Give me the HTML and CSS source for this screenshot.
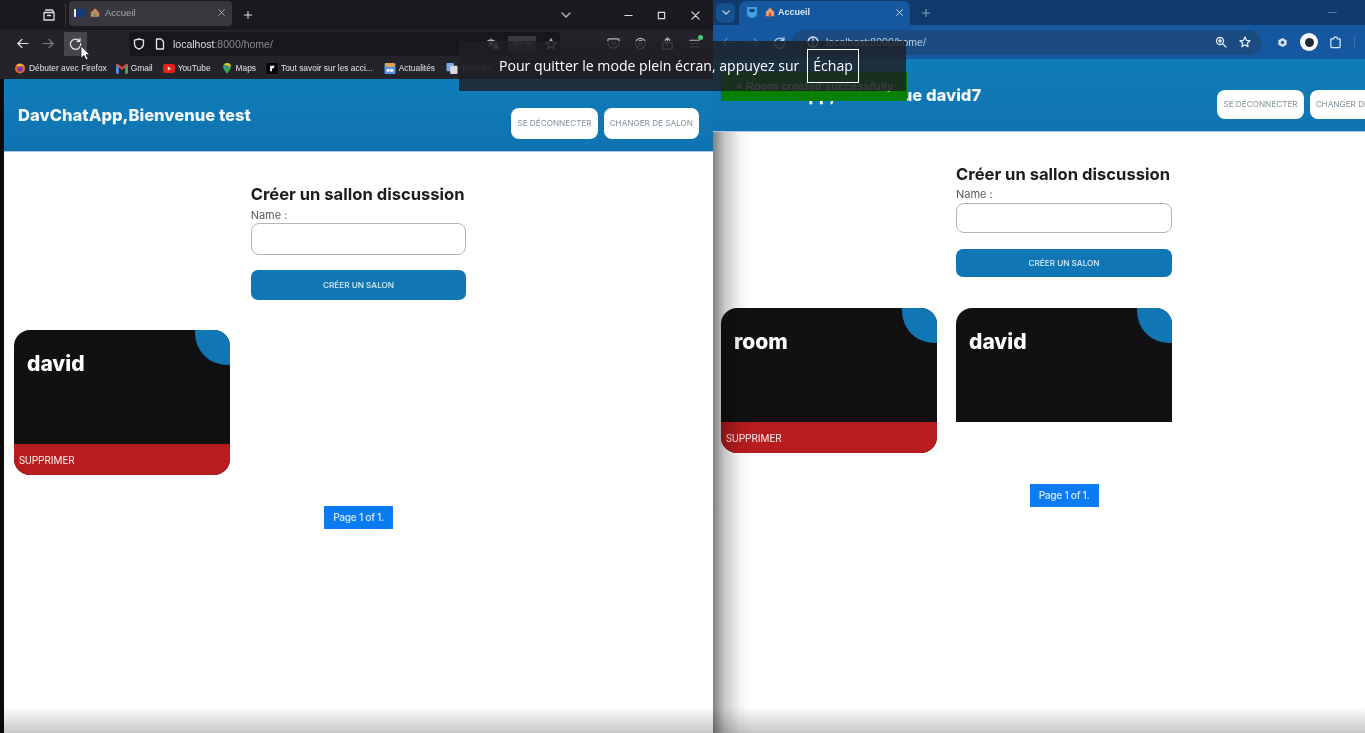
FILE: index.html
```html
<!DOCTYPE html>
<html lang="fr">
<head>
<meta charset="utf-8">
<title>Accueil</title>
<link rel="stylesheet" href="styles.css">
</head>
<body>
<div class="desktop">

  <section class="window fx">
    <div class="fx-tabs">
      <svg class="ic fx-tabview" viewBox="0 0 14 14"><path d="M2 4.500h10v7.500H2zM3.500 2h7l1.500 2.500M5.500 7.500h3" /></svg>
      <div class="fx-sep"></div>
      <div class="fx-tab">
        <span class="fav-blue"></span>
        <svg class="fav-home" viewBox="0 0 12 12"><path d="M6 1l5 5v5H1V6z" fill="#c9875c"/><path d="M4.500 7h3v4h-3z" fill="#5a9a7a"/></svg>
        <span class="fx-tab-title">Accueil</span>
        <svg class="ic fx-tab-x" viewBox="0 0 10 10"><path d="M1 1l8 8M9 1l-8 8"/></svg>
      </div>
      <svg class="ic fx-plus" viewBox="0 0 10 10"><path d="M5 0v10M0 5h10"/></svg>
      <svg class="ic fx-chev" viewBox="0 0 10 6"><path d="M1 1l4 4 4-4"/></svg>
      <svg class="ic fx-min" viewBox="0 0 10 10"><path d="M1 5h8"/></svg>
      <svg class="ic fx-max" viewBox="0 0 10 10"><path d="M1.500 1.500h7v7h-7z"/></svg>
      <svg class="ic fx-close" viewBox="0 0 10 10"><path d="M1 1l8 8M9 1l-8 8"/></svg>
    </div>
    <div class="fx-bar">
      <svg class="ic nav-ic" viewBox="0 0 14 14"><path d="M13 7H2M6.500 2.500L2 7l4.500 4.500"/></svg>
      <svg class="ic nav-ic dim" viewBox="0 0 14 14"><path d="M1 7h11M7.500 2.500L12 7l-4.500 4.500"/></svg>
      <span class="reload-box"><svg class="ic nav-ic" viewBox="0 0 14 14"><path d="M11.500 4.500A5.500 5.500 0 1 0 12.500 7M11.800 1.500v3.200H8.600"/></svg></span>
      <div class="fx-url">
        <svg class="ic url-ic" viewBox="0 0 12 12"><path d="M6 1l4.500 1.200v3.300C10.500 8.500 8.500 10.300 6 11 3.500 10.300 1.500 8.500 1.500 5.500V2.200z"/></svg>
        <svg class="ic url-ic" viewBox="0 0 12 12"><path d="M2.500 1h4.500l2.500 2.500V11h-7z"/></svg>
        <span class="fx-url-text"><b>localhost</b>:8000/home/</span>
        <span class="fx-url-right">
          <svg class="ic url-ic dim2" viewBox="0 0 12 12"><path d="M1 2.500h6M4 1v1.500M6 2.500C5.500 5 3.500 7 1.500 8M2.500 4.500C3.500 6 5 7 6.500 7.500M6.500 11l2.500-6 2.500 6M7.500 9.500h3"/></svg>
          <span class="zoom-chip">90 %</span>
          <svg class="ic url-ic dim2" viewBox="0 0 12 12"><path d="M6 1l1.500 3.300 3.500.4-2.600 2.400.7 3.500L6 8.800 2.900 10.600l.7-3.500L1 4.700l3.500-.4z"/></svg>
        </span>
      </div>
      <div class="fx-tools">
        <svg class="ic" viewBox="0 0 14 14"><path d="M2 2h10a1 1 0 0 1 1 1v3a6 6 0 0 1-12 0V3a1 1 0 0 1 1-1zM4.500 5.500L7 8l2.500-2.500"/></svg>
        <svg class="ic" viewBox="0 0 14 14"><circle cx="7" cy="7" r="5.500"/><circle cx="7" cy="5.500" r="2"/><path d="M3.500 11c.8-2 2-2.500 3.500-2.500s2.700.5 3.500 2.500"/></svg>
        <svg class="ic" viewBox="0 0 14 14"><path d="M2 6h10v7H2zM7 9V1M4.500 3.500L7 1l2.500 2.500"/></svg>
        <span class="menu-wrap">
          <svg class="ic" viewBox="0 0 14 14"><path d="M2 3.500h10M2 7h10M2 10.500h10"/></svg>
          <i class="menu-dot"></i>
        </span>
      </div>
    </div>
    <div class="fx-marks">
      <span class="mark m1"><svg class="mi" viewBox="0 0 12 12"><circle cx="6" cy="6" r="5.500" fill="#e8642a"/><circle cx="6" cy="6.500" r="3" fill="#6a3bb0"/><path d="M2 3c2-3 7-3 9 1-2-1.500-4-1.500-5 0z" fill="#f7b52a"/></svg>Débuter avec Firefox</span>
      <span class="mark m2"><svg class="mi" viewBox="0 0 12 10"><path d="M0 1v9h3V4l3 2.500L9 4v6h3V1L10.500 0 6 3.500 1.500 0z" fill="#d9483b"/><path d="M0 1v9h3V4z" fill="#4a86e8"/><path d="M12 1v9H9V4z" fill="#3aa757"/></svg>Gmail</span>
      <span class="mark m3"><svg class="mi" viewBox="0 0 12 9"><rect width="12" height="9" rx="2" fill="#e62117"/><path d="M4.800 2.500L8 4.500 4.800 6.500z" fill="#fff"/></svg>YouTube</span>
      <span class="mark m4"><svg class="mi" viewBox="0 0 10 14"><path d="M5 0a5 5 0 0 1 5 5c0 3-3 5-5 9-2-4-5-6-5-9a5 5 0 0 1 5-5z" fill="#3aa757"/><path d="M5 0a5 5 0 0 1 5 5L1 2a5 5 0 0 1 4-2z" fill="#f2b90f"/><circle cx="5" cy="5" r="1.800" fill="#3b78e7"/></svg>Maps</span>
      <span class="mark m5"><svg class="mi" viewBox="0 0 12 12"><rect width="12" height="12" rx="1.500" fill="#000"/><path d="M4 3h5L7.500 6H6v3H4z" fill="#fff"/></svg>Tout savoir sur les acci...</span>
      <span class="mark m6"><svg class="mi" viewBox="0 0 12 12"><rect width="12" height="12" rx="1.500" fill="#5b93e8"/><rect x="1" y="0" width="10" height="4" rx="1" fill="#e8a33d"/><circle cx="4" cy="8" r="1.800" fill="#fff"/><circle cx="8" cy="8" r="1.800" fill="#fff"/></svg>Actualités</span>
      <span class="mark m7"><svg class="mi" viewBox="0 0 12 12"><rect width="8" height="9" rx="1" fill="#7aa7ea"/><rect x="4" y="3" width="8" height="9" rx="1" fill="#d8d8dc"/></svg>Traduire</span>
    </div>

    <div class="page">
      <header class="app-head">
        <h1 class="brand">DavChatApp,Bienvenue test</h1>
        <nav class="head-actions">
          <a class="head-btn">SE DÉCONNECTER</a>
          <a class="head-btn">CHANGER DE SALON</a>
        </nav>
      </header>
      <main class="content">
        <form class="room-form">
          <h2 class="form-title">Créer un sallon discussion</h2>
          <label class="form-label">Name :</label>
          <div class="form-input"></div>
          <div class="form-submit">CRÉER UN SALON</div>
        </form>
        <div class="cards">
          <article class="card">
            <div class="card-top"><span class="card-name">david</span><i class="card-corner"></i></div>
            <div class="card-del">SUPPRIMER</div>
          </article>
        </div>
        <div class="pager"><span class="pager-chip">Page 1 of 1.</span></div>
      </main>
    </div>
  </section>

  <section class="window cr">
    <div class="cr-tabs">
      <span class="cr-search"><svg class="ic" viewBox="0 0 10 6"><path d="M1 1l4 4 4-4"/></svg></span>
      <div class="cr-tab">
        <svg class="cr-fav" viewBox="0 0 12 12"><path d="M1 1h10v6a5 5 0 0 1-10 0z" fill="#3fa0e8"/><path d="M3.500 3h5v3h-5z" fill="#0f3a6e"/></svg>
        <svg class="cr-fav2" viewBox="0 0 12 12"><path d="M6 1l5 5v5H1V6z" fill="#e8a06a"/><path d="M4.500 7h3v4h-3z" fill="#d9483b"/></svg>
        <span class="cr-tab-title">Accueil</span>
        <svg class="ic cr-tab-x" viewBox="0 0 10 10"><path d="M1 1l8 8M9 1l-8 8"/></svg>
      </div>
      <svg class="ic cr-plus" viewBox="0 0 10 10"><path d="M5 0v10M0 5h10"/></svg>
      <svg class="ic cr-min" viewBox="0 0 10 10"><path d="M1 5h8"/></svg>
    </div>
    <div class="cr-bar">
      <svg class="ic nav-ic dim3" viewBox="0 0 14 14"><path d="M13 7H2M6.500 2.500L2 7l4.500 4.500"/></svg>
      <svg class="ic nav-ic dim3" viewBox="0 0 14 14"><path d="M1 7h11M7.500 2.500L12 7l-4.500 4.500"/></svg>
      <svg class="ic nav-ic dim4" viewBox="0 0 14 14"><path d="M11.500 4.500A5.500 5.500 0 1 0 12.500 7M11.800 1.500v3.200H8.600"/></svg>
      <div class="cr-url">
        <svg class="ic url-ic" viewBox="0 0 12 12"><circle cx="6" cy="6" r="5"/><path d="M6 5.500V9M6 3v1"/></svg>
        <span class="cr-url-text">localhost:8000/home/</span>
        <span class="cr-url-right">
          <svg class="ic url-ic" viewBox="0 0 12 12"><circle cx="5" cy="5" r="3.500"/><path d="M7.500 7.500L11 11M3.500 5h3M5 3.500v3"/></svg>
          <svg class="ic url-ic" viewBox="0 0 12 12"><path d="M6 1l1.500 3.300 3.500.4-2.600 2.400.7 3.500L6 8.800 2.900 10.600l.7-3.500L1 4.700l3.500-.4z"/></svg>
        </span>
      </div>
      <div class="cr-tools">
        <svg class="cr-tool" viewBox="0 0 12 12"><path d="M6 1l4.500 2.500v5L6 11 1.500 8.500v-5z" fill="#d6e4f2"/><circle cx="6" cy="6" r="1.800" fill="#15589f"/></svg>
        <span class="cr-avatar"><i class="cr-avatar-in"></i></span>
        <svg class="ic cr-puzzle" viewBox="0 0 14 14"><path d="M2 3h3a2 2 0 0 1 4 0h3v8a1.500 1.500 0 0 1-1.500 1.500H3.500A1.500 1.500 0 0 1 2 11z"/></svg>
        <i class="cr-sep"></i>
      </div>
    </div>

    <div class="page">
      <header class="app-head">
        <h1 class="brand">DavChatApp,Bienvenue david7</h1>
        <nav class="head-actions">
          <a class="head-btn">SE DÉCONNECTER</a>
          <a class="head-btn">CHANGER DE SALON</a>
        </nav>
      </header>
      <main class="content">
        <form class="room-form">
          <h2 class="form-title">Créer un sallon discussion</h2>
          <label class="form-label">Name :</label>
          <div class="form-input"></div>
          <div class="form-submit">CRÉER UN SALON</div>
        </form>
        <div class="cards">
          <article class="card">
            <div class="card-top"><span class="card-name">room</span><i class="card-corner"></i></div>
            <div class="card-del">SUPPRIMER</div>
          </article>
          <article class="card card-plain">
            <div class="card-top"><span class="card-name">david</span><i class="card-corner"></i></div>
          </article>
        </div>
        <div class="pager"><span class="pager-chip">Page 1 of 1.</span></div>
      </main>
      <div class="alert">× Room created successfully</div>
    </div>
  </section>

  <div class="bottom-fade"></div>
  <div class="win-shadow"></div>
  <svg class="cursor" viewBox="0 0 10 16"><path d="M1 1v12l3-2.500 2 4.500 2-1-2-4.300h3.500z" fill="#fff" stroke="#222" stroke-width=".8"/></svg>

  <div class="fs-notice">
    <span class="fs-text">Pour quitter le mode plein écran, appuyez sur</span>
    <kbd class="fs-key">Échap</kbd>
  </div>
</div>
</body>
</html>
```
FILE: styles.css
```css
* { box-sizing: border-box; }
html, body { margin: 0; padding: 0; height: 100%; overflow: hidden; background: #fff; }
body { font-family: "Liberation Sans", Arial, sans-serif; }

.desktop { position: relative; width: 1365px; height: 733px; overflow: hidden; background: #fff; filter: blur(.35px); }
.window { position: absolute; top: 0; height: 733px; overflow: hidden; display: flex; flex-direction: column; background: #fff; }
.fx { left: 0; width: 713px; background: #0b0b0e; --page-pad: 10px; --gap: 21px; --input-h: 32px; --btn-h: 30px; --input-mt: 2px; --btn-mt: 15px; --pager-mt: 31px; --label-mt: 5px; --cards-mt: 30px; --head-btn-h: 31px; }
.cr { left: 713px; width: 652px; --page-pad: 8px; --gap: 19px; --input-h: 30px; --btn-h: 28px; --input-mt: 3px; --btn-mt: 16px; --pager-mt: 31px; --label-mt: 4px; --cards-mt: 31px; --head-btn-h: 29px; }

.ic { fill: none; stroke: currentColor; stroke-width: 1.300; stroke-linecap: round; stroke-linejoin: round; flex: none; display: block; }

/* Firefox chrome */
.fx-tabs { height: 30px; flex: none; background: #1b1a20; display: flex; align-items: center; color: #dddde0; position: relative; }
.fx-tabview { width: 14px; height: 14px; margin-left: 42px; }
.fx-sep { width: 1px; height: 24px; background: #35343a; margin-left: 9px; }
.fx-tab { width: 163px; height: 25px; margin: 0 0 3px 3px; background: #38373e; border-radius: 4px; display: flex; align-items: center; padding: 0 7px 2px 5px; }
.fav-blue { width: 12px; height: 8px; background: linear-gradient(90deg, #eee 0 20%, #143c7a 20%); border-radius: 1px; flex: none; }
.fav-home { width: 10px; height: 11px; margin-left: 4px; flex: none; }
.fx-tab-title { font-size: 9.500px; color: #a9a9ae; margin-left: 5px; flex: 1; }
.fx-tab-x { width: 7px; height: 7px; color: #b5b5b9; }
.fx-plus { width: 8px; height: 8px; margin-left: 12px; }
.fx-chev { width: 10px; height: 6px; margin-left: 309px; color: #bcbcc0; }
.fx-min { width: 9px; height: 9px; margin-left: 53px; }
.fx-max { width: 9px; height: 9px; margin-left: 24px; }
.fx-close { width: 9px; height: 9px; margin-left: 25px; }

.fx-bar { height: 27px; flex: none; background: #24232a; display: flex; align-items: center; color: #e8e8ea; padding-left: 16px; }
.nav-ic { width: 13px; height: 13px; }
.fx-bar > .nav-ic + .nav-ic { margin-left: 13px; }
.dim { opacity: .45; }
.dim2 { opacity: .75; }
.dim3 { opacity: .35; }
.dim4 { opacity: .8; }
.reload-box { width: 23px; height: 24px; margin-left: 9px; background: #47464d; display: flex; align-items: center; justify-content: center; }
.fx-url { width: 431px; height: 24px; margin-left: 42px; background: #17161b; border-radius: 4px; display: flex; align-items: center; padding-left: 4px; }
.url-ic { width: 12px; height: 12px; margin-right: 9px; }
.fx-url-text { font-size: 10.500px; color: #8a8a90; margin-left: -2px; }
.fx-url-text b { font-weight: 400; color: #dedee2; }
.fx-url-right { margin-left: auto; display: flex; align-items: center; padding-right: 3px; }
.fx-url-right .url-ic { margin-right: 0; }
.zoom-chip { width: 28px; height: 15px; margin: 0 9px; background: #3a393f; color: #8a8a8f; font-size: 8px; text-align: center; line-height: 15px; }
.fx-tools { display: flex; gap: 14px; margin-left: 47px; }
.fx-tools svg { width: 13px; height: 13px; color: #b4b4b8; }
.menu-wrap { position: relative; display: block; }
.menu-dot { position: absolute; right: -2px; top: -2px; width: 5px; height: 5px; border-radius: 50%; background: #3fd07a; }

.fx-marks { height: 22px; flex: none; background: #24232a; display: flex; align-items: center; padding-left: 14px; color: #e3e3e6; font-size: 8.400px; white-space: nowrap; }
.mark { display: flex; align-items: center; }
.mi { width: 12px; height: 11px; margin-right: 3px; flex: none; }
.m2 { margin-left: 9px; }
.m3 { margin-left: 10px; }
.m4 { margin-left: 10px; }
.m5 { margin-left: 10px; }
.m6 { margin-left: 11px; }
.m7 { margin-left: 11px; color: #77777c; }

/* Chrome */
.cr-tabs { height: 25px; flex: none; background: #0f3a6b; display: flex; align-items: center; color: #dfe9f4; }
.cr-search { width: 19px; height: 20px; margin-left: 3px; border-radius: 6px; background: #15508f; display: flex; align-items: center; justify-content: center; }
.cr-search svg { width: 8px; height: 5px; }
.cr-tab { width: 171px; height: 24px; margin: 1px 0 0 4px; align-self: flex-start; background: #15589f; border-radius: 7px 7px 0 0; display: flex; align-items: center; padding: 0 7px 2px 7px; }
.cr-fav { width: 12px; height: 12px; flex: none; }
.cr-fav2 { width: 10px; height: 10px; margin-left: 7px; flex: none; }
.cr-tab-title { font-size: 9px; font-weight: 700; color: #dce6f2; margin-left: 3px; flex: 1; }
.cr-tab-x { width: 7px; height: 7px; }
.cr-plus { width: 8px; height: 8px; margin-left: 12px; opacity: .6; }
.cr-min { width: 9px; height: 9px; margin-left: 398px; opacity: .4; }

.cr-bar { height: 34px; flex: none; background: #15589f; display: flex; align-items: center; color: #dfe9f4; padding-left: 8px; }
.cr-bar > .nav-ic + .nav-ic { margin-left: 13px; }
.cr-url { width: 470px; height: 25px; margin-left: 5px; background: #1b4b80; border-radius: 13px; display: flex; align-items: center; padding-left: 16px; }
.cr-url-text { font-size: 10.500px; color: #b9cde2; margin-left: -2px; }
.cr-url-right { margin-left: auto; display: flex; align-items: center; gap: 3px; padding-right: 1px; }
.cr-tools { display: flex; align-items: center; margin-left: 16px; }
.cr-tool { width: 11px; height: 11px; }
.cr-avatar { width: 18px; height: 18px; margin-left: 12px; background: #fff; border-radius: 50%; display: flex; align-items: center; justify-content: center; }
.cr-avatar-in { width: 9px; height: 9px; background: #1d2a3a; border-radius: 50%; }
.cr-puzzle { width: 13px; height: 13px; margin-left: 11px; }
.cr-sep { width: 1px; height: 12px; margin-left: 12px; background: #3b6ea6; }

/* App page */
.page { position: relative; flex: 1; background: #fff; display: flex; flex-direction: column; min-height: 0; }
.fx .page { margin-left: 4px; width: 709px; }
.cr .page { width: 702px; flex-shrink: 0; }
.app-head { height: 73px; flex: none; background: linear-gradient(#0f7db8, #1073b1); border-bottom: 1px solid #a9c6dc; display: flex; align-items: center; justify-content: space-between; padding: 0 14px; }
.cr .app-head { padding: 0 0 0 12px; }
.brand { margin: 0; font: 800 16.600px/1 Inter, "Liberation Sans", sans-serif; color: #f2f8fc; white-space: nowrap; }
.head-actions { display: flex; gap: 6px; margin-top: 16px; flex: none; }
.cr .head-actions { margin-top: 18px; margin-right: 10px; }
.head-btn { display: block; height: var(--head-btn-h); padding: 0 6px; background: #fff; border-radius: 8px; font-family: Inter, "Liberation Sans", sans-serif; font-size: 8.200px; line-height: var(--head-btn-h); color: #83939c; white-space: nowrap; }

.content { display: grid; grid-template-columns: repeat(3, 1fr); column-gap: var(--gap); padding: 32px var(--page-pad) 0; }
.room-form { grid-column: 2; grid-row: 1; display: flex; flex-direction: column; }
.form-title { margin: 0; font: 700 16.600px/20px Inter, "Liberation Sans", sans-serif; color: #1c1c20; white-space: nowrap; }
.form-label { margin-top: var(--label-mt); font: 400 11px/12px Inter, "Liberation Sans", sans-serif; color: #5a5a5e; }
.form-input { margin-top: var(--input-mt); height: var(--input-h); background: #fff; border: 1px solid #b4b4ba; border-radius: 8px; }
.form-submit { margin-top: var(--btn-mt); height: var(--btn-h); background: #1077b4; border-radius: 7px; color: #dcecf6; font: 500 8.200px/1 Inter, "Liberation Sans", sans-serif; display: flex; align-items: center; justify-content: center; }

.cards { grid-column: 1 / -1; grid-row: 2; display: grid; grid-template-columns: subgrid; align-items: start; margin-top: var(--cards-mt); }
.card { border-radius: 16px; overflow: hidden; background: #111113; }
.card-plain { border-radius: 16px 16px 0 0; }
.card-top { position: relative; height: 114px; overflow: hidden; padding: 22px 0 0 13px; }
.card-name { font: 800 21px/24px Inter, "Liberation Sans", sans-serif; color: #fdfdfd; }
.card-corner { position: absolute; top: -29px; right: -29px; width: 64px; height: 64px; border-radius: 50%; background: #1077b4; }
.card-del { height: 31px; background: #b71c1e; color: #fbeaea; font: 400 10.200px/33px Roboto, "Liberation Sans", sans-serif; padding-left: 5px; }

.pager { grid-column: 2; grid-row: 3; display: flex; justify-content: center; margin-top: var(--pager-mt); }
.pager-chip { width: 69px; height: 23px; background: #0b7bf2; color: #d8e9fd; font: 500 10.200px/23px Inter, "Liberation Sans", sans-serif; text-align: center; letter-spacing: -.3px; white-space: nowrap; }

.alert { position: absolute; left: 8px; top: 13px; width: 186px; height: 29px; background: #0a8000; color: #b4bcb4; font: 700 11.400px/29px "Liberation Sans", sans-serif; padding-left: 15px; overflow: hidden; white-space: nowrap; }

/* Overlays */
.bottom-fade { position: absolute; left: 0; right: 0; bottom: 0; height: 26px; background: linear-gradient(rgba(0,0,0,0), rgba(0,0,0,.22)); pointer-events: none; }
.win-shadow { position: absolute; left: 713px; top: 132px; bottom: 0; width: 38px; background: linear-gradient(90deg, rgba(0,0,0,.5), rgba(0,0,0,.22) 30%, rgba(0,0,0,.05) 70%, rgba(0,0,0,0)); pointer-events: none; }
.cursor { position: absolute; left: 80px; top: 45px; width: 10px; height: 16px; }
.fs-notice { position: absolute; left: 459px; top: 41px; width: 447px; height: 50px; background: rgba(31,31,36,.82); display: flex; align-items: center; padding: 0 0 0 40px; }
.fs-text { font: 400 14.100px/1 "Open Sans", "Liberation Sans", sans-serif; color: #fff; white-space: nowrap; }
.fs-key { width: 52px; height: 34px; margin-left: auto; margin-right: 47px; border: 1px solid #fff; color: #fff; font: 400 14.100px/32px "Open Sans", "Liberation Sans", sans-serif; text-align: center; }
```
